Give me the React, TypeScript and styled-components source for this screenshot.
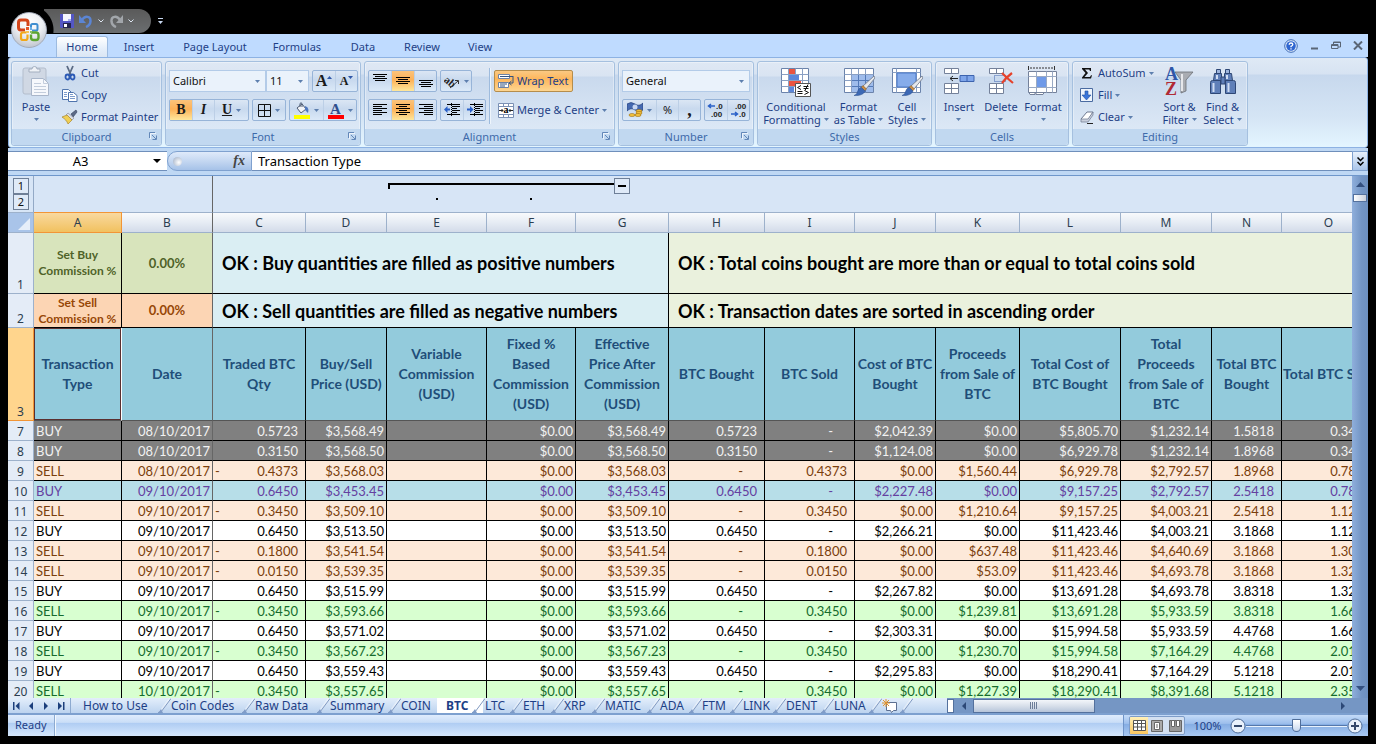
import React from 'react';
import styled, { createGlobalStyle, css } from 'styled-components';

const ui = '"Noto Sans", "Open Sans", sans-serif';
const cellFont = 'Lato, "Open Sans", sans-serif';
const navy = '#1e3f86';

const Global = createGlobalStyle`
  *, *::before, *::after { box-sizing: border-box; }
  html, body { margin: 0; background: #000; }
  body { font: 11px/16px ${ui}; color: ${navy}; }
  button, input, select { font: inherit; color: inherit; margin: 0; padding: 0; border: 0; background: none; border-radius: 0; }
  button { cursor: default; }
  svg { display: block; flex: none; }
`;

/* ---------- window ---------- */
const Window = styled.div`
  display: flex; flex-direction: column; height: 100vh; min-height: 400px;
  padding: 0 8px 8px; background: #000; position: relative;
`;
const TitleBar = styled.header`
  height: 34px; flex: none; display: flex; align-items: flex-start; padding: 9px 0 0 36px;
`;
const QuickBar = styled.div`
  height: 24px; width: 107px; padding-left: 16px; display: flex; align-items: center; gap: 5px;
  border-radius: 0 12px 12px 0;
  background: radial-gradient(circle at -15px 21px, #000 24px, transparent 25px), linear-gradient(#5a5a5a, #6b6e70);
`;
const QuickButton = styled.button`display: flex; align-items: center;`;
const Customize = styled.button`display: flex; margin: 8px 0 0 6px;`;
const Orb = styled.button`
  && { position: absolute; left: 11px; top: 12px; width: 36px; height: 36px; border-radius: 50%;
  display: flex; align-items: center; justify-content: center;
  background: radial-gradient(circle at 50% 30%, #fff 0, #eceef2 45%, #c3c8d2 80%, #e8ebf0 100%);
  border: 1px solid #a3aab8; }
`;

/* ---------- ribbon tabs ---------- */
const TabBar = styled.nav`
  height: 23px; flex: none; display: flex; align-items: flex-end; background: #bfdbff; padding-left: 48px;
`;
const RibbonTab = styled.button<{ $w: number; $on?: boolean }>`
  && { width: ${p => p.$w}px; height: 21px; line-height: 20px; text-align: center; white-space: nowrap;
  border: 1px solid transparent; border-bottom: 0; }
  ${p => p.$on && css`
    && { background: linear-gradient(#fff, #e4eefa 60%, #dbe6f4); border-color: #9dbbe0; border-radius: 3px 3px 0 0; }
  `}
`;
const WindowButtons = styled.div`
  margin-left: auto; display: flex; align-items: center; gap: 12px; height: 23px; padding-right: 5px;
  button { display: flex; }
`;

/* ---------- ribbon ---------- */
const Ribbon = styled.section`
  height: 91px; flex: none; display: flex; gap: 3px; padding: 3px 2px 1px; overflow: hidden;
  background: linear-gradient(#dfe9f5 0, #d7e3f2 16px, #c7d8ed 17px, #d5e5f5 60px, #e3f5ff 88px);
  border: 1px solid #8db2e3; border-radius: 3px;
`;
const GroupBox = styled.section<{ $w: number }>`
  width: ${p => p.$w}px; flex: none; height: 85px; display: flex; flex-direction: column;
  border: 1px solid #a5c0df; border-radius: 3px; box-shadow: inset 0 0 0 1px rgba(255,255,255,.35);
  background: linear-gradient(#dfe8f4 0, #d9e4f2 14px, #c9d9ed 15px, #dce8f6 68px);
`;
const GroupBody = styled.div`flex: 1; display: flex; padding: 0 2px;`;
const GroupLabel = styled.footer`
  height: 16px; display: flex; align-items: center; justify-content: center; color: #3e6aaa;
  background: #c1d8f0; border-radius: 0 0 3px 3px; position: relative;
`;
const Launcher = styled.button`position: absolute; right: 4px; top: 3px; display: flex;`;
const Stack = styled.div<{ $w?: number }>`
  display: flex; flex-direction: column; ${p => p.$w && `width: ${p.$w}px;`}
`;
const SmallButton = styled.button<{ $on?: boolean }>`
  && { display: flex; align-items: center; gap: 3px; height: 22px; padding: 0 3px 0 4px; white-space: nowrap; }
  ${p => p.$on && css`
    && { border: 1px solid #b58d4c; border-radius: 2px; padding: 0 4px 0 3px;
    background: linear-gradient(#fbc983, #fdb65c 40%, #fdd590); }
  `}
`;
const BigButton = styled.button<{ $w: number }>`
  && { width: ${p => p.$w}px; flex: none; display: flex; flex-direction: column; align-items: center; gap: 2px;
  padding-top: 4px; line-height: 13px; white-space: nowrap; text-align: center; }
`;
const LabelLine = styled.span`display: flex; align-items: center; justify-content: center; gap: 3px; min-height: 13px;`;
const Rows = styled.div`display: flex; flex-direction: column; gap: 7px; padding: 8px 0 0 1px;`;
const Line = styled.div`display: flex; gap: 3px;`;
const Strip = styled.div`
  display: flex; height: 22px; border: 1px solid #97b4d8; border-radius: 2px; overflow: hidden;
  background: linear-gradient(#dbe6f4, #c8d9ee 45%, #dbe9f8);
`;
const Tool = styled.button<{ $w: number; $on?: boolean }>`
  && { width: ${p => p.$w}px; display: flex; align-items: center; justify-content: center; gap: 4px; color: #1a1a1a; }
  && + && { border-left: 1px solid #bccfe6; }
  ${p => p.$on && css`&& { background: linear-gradient(#fbc37b, #fdb157 45%, #fee79c); }`}
`;
const Glyph = styled.span<{ $size?: number; $italic?: boolean; $under?: boolean }>`
  font: ${p => (p.$italic ? 'italic ' : '')}bold ${p => p.$size || 14}px/16px "Liberation Serif", serif;
  ${p => p.$under && 'text-decoration: underline;'}
`;
const SizeTool = styled.span`display: flex; align-items: center; svg { margin-bottom: 8px; }`;
const Combo = styled.label<{ $w: number }>`
  width: ${p => p.$w}px; height: 22px; display: flex; align-items: center; padding-right: 5px;
  border: 1px solid #b3cbe8; background: #eaf2fb; color: #111;
  select { appearance: none; flex: 1; min-width: 0; padding-left: 3px; outline: 0; }
`;
const Combos = styled.div`display: flex;`;
const Divider = styled.i`width: 1px; height: 56px; margin: 6px 2px 0 3px; background: #9ebbdd; border-right: 1px solid #eef5fc; box-sizing: content-box;`;

/* ---------- formula bar ---------- */
const FormulaBar = styled.div`
  height: 28px; flex: none; display: flex; padding: 3px 0 4px; background: #bfd8f4; border-bottom: 1px solid #6f97cb;
  font-size: 13px;
`;
const NameBox = styled.label`
  width: 159px; display: flex; align-items: center; background: #fff; border-top: 1px solid #6f8fbb; border-bottom: 1px solid #6f8fbb; color: #000;
  input { flex: 1; min-width: 0; text-align: center; outline: 0; }
  svg { margin-right: 6px; }
`;
const FxBox = styled.div`
  width: 85px; display: flex; align-items: center; justify-content: space-between; padding: 0 6px 0 5px;
  border: 1px solid #7fa1cf; border-radius: 11px 0 0 11px; background: linear-gradient(#dfeafa, #c4d7f1 50%, #a6c2e8);
`;
const Knob = styled.i`width: 9px; height: 9px; border-radius: 50%; background: radial-gradient(circle at 65% 60%, #fff, #9aaac2);`;
const Fx = styled.button`&& { font: italic bold 14px/16px "Liberation Serif", serif; color: #444; }`;
const FormulaInput = styled.input`
  && { flex: 1; min-width: 0; background: #fff; color: #000; padding-left: 6px; outline: 0; border: solid #6f8fbb; border-width: 1px 0; }
`;
const Expand = styled.button`
  && { width: 16px; border: 1px solid #7fa1cf; background: linear-gradient(#e8f1fc, #a9c5ea); display: flex; align-items: center; justify-content: center; }
`;

/* ---------- worksheet ---------- */
const WIDTHS = [26, 88, 91, 93, 81, 100, 89, 93, 96, 90, 81, 84, 101, 91, 70, 94];
const SheetArea = styled.main`flex: 1; min-height: 0; display: flex; background: #d7e5f6;`;
const View = styled.div`flex: 1; min-width: 0; overflow: hidden;`;
const Outline = styled.div`
  display: grid; grid-template-columns: ${WIDTHS.map(w => `${w}px`).join(' ')}; height: 36px; background: #d7e5f6;
`;
const Levels = styled.div`
  grid-column: 1; padding: 2px 5px 0 5px; border-right: 1px solid #93a9c6; display: flex; flex-direction: column;
`;
const SquareButton = styled.button`
  && { width: 16px; height: 16px; border: 1px solid #6e7f97; color: #111; line-height: 14px; text-align: center; background: #dfeaf8; flex: none; }
`;
const Frozen = styled.div`grid-column: 2 / 4; border-right: 1px solid #666;`;
const Bracket = styled.div`
  grid-column: 6 / 9; display: grid; grid-template-columns: 98px 89px 1fr; grid-template-rows: 18px 12px;
  padding: 2px 39px 0 1px;
`;
const BracketLine = styled.div`grid-column: 1 / 4; display: flex; align-items: flex-start;
  i { flex: 1; height: 6px; margin-top: 5px; border-top: 2px solid #000; border-left: 2px solid #000; }
  span { display: block; width: 8px; height: 2px; margin: 0 auto; background: #000; }
`;
const Dot = styled.i`width: 2px; height: 2px; margin: 2px auto; background: #000;`;

const Table = styled.table`
  table-layout: fixed; border-collapse: separate; border-spacing: 0; width: 1368px;
  font: 13px/17px ${cellFont}; color: #000; background: #fff;
  th, td { padding: 0; overflow: hidden; white-space: nowrap; }
`;
const ColHead = styled.th<{ $on?: boolean; $frozen?: boolean }>`
  && { padding-top: 1px; }
  height: 21px; font: 12px/18px ${ui}; color: #2c3e50;
  background: linear-gradient(#f8fafc, #e6ecf4 50%, #d3dbe9);
  border: solid #9db1cb; border-width: 1px 1px 1px 0;
  ${p => p.$on && css`background: linear-gradient(#f9d99f, #f1c15f); border-color: #f29536;`}
  ${p => p.$frozen && css`border-right-color: #666;`}
`;
const Corner = styled.th`
  height: 21px; background: #a9c4e9; border: solid #9db1cb; border-width: 1px 1px 1px 0;
  svg { margin: 3px 3px 0 auto; }
`;
const SheetRow = styled.tr<{ $h: number }>`height: ${p => p.$h}px;`;
const RowHead = styled.th<{ $on?: boolean }>`
  font: 12px/16px ${ui}; color: #2c3e50; vertical-align: bottom; background: #e4ecf7;
  border: solid #9db1cb; border-width: 0 1px 1px 0;
  ${p => p.$on && css`background: #ffd58d; border-color: #f29536;`}
`;
const Rate = styled.td<{ $tone: 'buy' | 'sell'; $small?: boolean; $frozen?: boolean }>`
  text-align: center; vertical-align: middle; font-weight: 700; border: solid #000; border-width: 0 1px 1px 0;
  ${p => p.$small && 'font-size: 12px; line-height: 16px;'}
  ${p => p.$frozen && 'border-right-color: #666;'}
  ${p => (p.$tone === 'buy' ? 'background: #d8e4bc; color: #4f6228;' : 'background: #fcd5b4; color: #974706;')}
`;
const Notice = styled.td<{ $bg: string }>`
  && { padding-left: 9px; } background: ${p => p.$bg}; font-size: 18px; line-height: 24px; font-weight: 700; vertical-align: middle;
  border: solid #000; border-width: 0 1px 1px 0;
`;
const Title = styled.th<{ $on?: boolean; $frozen?: boolean }>`
  height: 93px; background: #93cbdc; color: #1f4e79; font-size: 14px; line-height: 20px; vertical-align: middle; font-weight: 700;
  border: solid #000; border-width: 0 1px 1px 0; border-bottom-color: #555;
  ${p => p.$frozen && 'border-right-color: #666;'}
  ${p => p.$on && 'border-right-color: #fff; box-shadow: inset 0 0 0 1px #5a3030;'}
`;
type Tone = 'gray' | 'peach' | 'blue' | 'plain' | 'green';
const tones: Record<Tone, string> = {
  gray: 'background: #808080; color: #f2f2f2;',
  peach: 'background: #fde9d9; color: #7a3e0c;',
  blue: 'background: #b7dee8; color: #6440a0;',
  plain: 'background: #fff; color: #000;',
  green: 'background: #d8ffd0; color: #156b2c;',
};
const Row = styled.tr<{ $tone: Tone }>`height: 20px; td { ${p => tones[p.$tone]} }`;
const Cell = styled.td<{ $pad?: number; $left?: boolean; $frozen?: boolean }>`
  && { padding: 2px ${p => p.$pad || 2}px 0 2px; }
  text-align: ${p => (p.$left ? 'left' : 'right')}; border: solid #000; border-width: 0 1px 1px 0;
  ${p => p.$frozen && 'border-right-color: #666;'}
`;
const Signed = styled.span`display: flex; justify-content: space-between;`;

/* ---------- scroll bars ---------- */
const VScroll = styled.div`
  width: 16px; flex: none; display: flex; flex-direction: column; align-items: center; padding: 6px 0 7px;
  background: linear-gradient(90deg, #8fafdc, #7395c4 60%, #6d90c0);
`;
const VThumb = styled.i`width: 14px; height: 8px; margin: 7px 0 auto; border: 1px solid #54719d; background: linear-gradient(90deg, #fff, #c9cfdb);`;
const HScroll = styled.div`
  flex: 1; min-width: 0; display: flex; align-items: center; background: #7596c4; padding-right: 16px;
  svg { margin: 0 6px; }
`;
const Splitter = styled.i`width: 7px; height: 14px; border: 1px solid #54719d; background: #fff; margin: 0 2px 0 0;`;
const HThumb = styled.i`
  width: 122px; height: 14px; margin-right: auto; border: 1px solid #54719d; display: flex; justify-content: center; align-items: center;
  background: linear-gradient(#f3f6fa, #d7dfea 50%, #b7c5da);
`;

/* ---------- sheet tabs and status ---------- */
const Bottom = styled.div`
  height: 17px; flex: none; display: flex; background: linear-gradient(#e3eefb, #bcd3ef); border-bottom: 2px solid #7da0cf;
  font-size: 12px;
`;
const Steps = styled.div`width: 63px; flex: none; display: flex; align-items: center; justify-content: space-around; border-right: 1px solid #8daad0; button { display: flex; }`;
const Tabs = styled.nav`width: 876px; flex: none; display: flex;`;
const SheetTab = styled.button<{ $w: number; $on?: boolean; $first?: boolean }>`
  && {
    width: ${p => p.$w}px; flex: none; padding-left: ${p => (p.$first ? 12 : 2)}px; display: flex; justify-content: space-between;
    align-items: center; line-height: 15px; white-space: nowrap;
  }
  ${p => p.$on && css`&& { background: #fff; font-weight: 700; padding-left: 9px; }`}
  svg:last-child { margin-right: -2px; }
`;
const Status = styled.footer`height: 21px; flex: none; display: flex; background: linear-gradient(#dfecfd, #cadef7 35%, #b0cdf3 40%, #d6e8fd);`;
const Ready = styled.span`width: 47px; padding: 2px 0 0 7px; border-right: 1px solid #8daad0; box-shadow: 1px 0 0 #f3f9ff;`;
const StatusRight = styled.div`
  margin-left: auto; width: 245px; display: flex; align-items: center; padding: 0 5px 0 5px;
  border-left: 1px solid #6f94c8; background: linear-gradient(#c4dbf8, #9dbfec 40%, #86aee4 45%, #a9c9f2);
`;
const ViewButtons = styled.div`display: flex; height: 19px; width: 56px; border: 1px solid #7d9cc8; border-radius: 2px; overflow: hidden; background: #d3e0f1;`;
const ViewButton = styled.button<{ $on?: boolean }>`
  && { flex: 1; display: flex; align-items: center; justify-content: center; ${p => p.$on && 'background: linear-gradient(#fff0b8, #fbc75f);'} }
`;
const Percent = styled.button`&& { width: 45px; text-align: center; }`;
const ZoomButton = styled.button`display: flex;`;
const Slider = styled.input`
  && { flex: 1; min-width: 0; height: 16px; appearance: none; background: linear-gradient(transparent 7px, #5578ab 7px 8px, #e8f2fd 8px 9px, transparent 9px); }
  &::-webkit-slider-thumb {
    appearance: none; width: 9px; height: 13px; background: linear-gradient(#fff, #c8d8ee); border: 1px solid #4f6d99;
    border-radius: 1px 1px 5px 5px;
  }
`;

/* ---------- icons ---------- */
const Arrow = ({ c = '#5d7fae' }: { c?: string }) => <svg width="5" height="3"><path d="M0 0h5L2.500 3z" fill={c} /></svg>;
const Tri = ({ d, c = '#1c3f7c', w = 5, h = 8 }: { d: string; c?: string; w?: number; h?: number }) => (
  <svg width={w} height={h}><path d={d} fill={c} /></svg>
);
const LaunchIcon = () => (
  <svg width="8" height="8" fill="none" stroke="#6287b8"><path d="M.5 6V.5H6M3 3l4 4M7.500 3.500v4h-4" /><path d="M1.500 7V1.500H7" stroke="#fff" opacity=".7" /></svg>
);
const OfficeLogo = () => (
  <svg width="26" height="26" viewBox="0 0 26 26" fill="none">
    <path d="M12 9V5.500q0-2.500-2.500-2.500H5Q2.500 3 2.500 5.500v5Q2.500 13 5 13h4" stroke="#d4451a" strokeWidth="3" />
    <path d="M15 11V8.500Q15 7 16.500 7H20q1.500 0 1.500 1.500V12q0 1.500-1.500 1.500h-4" stroke="#3f8ed0" strokeWidth="2" />
    <path d="M10.500 15.500H7q-2 0-2 2V21q0 2 2 2h2.500q2 0 2-2v-3.500" stroke="#f2a818" strokeWidth="2.200" />
    <path d="M15 15.500h5q2.500 0 2.500 2.500v2.500q0 2.500-2.500 2.500h-2.500Q15 23 15 20.500v-3" stroke="#5da532" strokeWidth="2.400" />
    <path d="M10 10h3v3h-3z" fill="#e2562a" /><path d="M14 10h2v3h-2z" fill="#6aaee6" /><path d="M10 14h3v2h-3z" fill="#f6c454" /><path d="M14 14h2v2h-2z" fill="#8cc462" />
  </svg>
);
const SaveIcon = () => (
  <svg width="14" height="14"><path d="M0 0h14v14H1L0 13z" fill="#5457c4" /><path d="M3 0h8v7H3z" fill="#f4f6ff" /><path d="M3 9h8v5H3z" fill="#23254f" /><path d="M4 10h3v3H4z" fill="#fff" /><path d="M8 5h3v2H8z" fill="#a8b1ee" /></svg>
);
const UndoIcon = ({ redo }: { redo?: boolean }) => (
  <svg width="14" height="14" viewBox="0 0 14 14"><g transform={redo ? 'translate(14 0) scale(-1 1)' : undefined}>
    <path d="M3 6C6 1 12 2 11.500 7.500 11.200 10 9.500 12 7 13" fill="none" stroke={redo ? '#a2a6ab' : '#5b85d4'} strokeWidth="2.400" />
    <path d="M0 1v8h7z" fill={redo ? '#a2a6ab' : '#5b85d4'} />
  </g></svg>
);
const QuickArrow = () => <svg width="6" height="4"><path d="M.5.5 3 3 5.500.5" fill="none" stroke="#dde6f2" /></svg>;
const PasteIcon = () => (
  <svg width="28" height="32" viewBox="0 0 28 32">
    <rect x="1" y="2" width="23" height="26" rx="2" fill="#d0d8e4" stroke="#b3bdcc" /><path d="M7 6V3h3a2.500 2.500 0 0 1 5 0h3v3z" fill="#eef1f6" stroke="#a3aebf" />
    <path d="M9.500 12.500h12l5 5v12h-17z" fill="#f6f8fc" stroke="#a9b6ca" /><path d="M21.500 12.500v5h5M12 17.500h7M12 20.500h12M12 23.500h12M12 26.500h12" fill="none" stroke="#c3cddc" />
  </svg>
);
const CutIcon = () => (
  <svg width="16" height="16" viewBox="0 0 16 16" fill="none"><path d="M5 1l4 9M11 1L7 10" stroke="#5b6b85" strokeWidth="1.800" /><ellipse cx="5.500" cy="12" rx="2" ry="2.500" stroke="#2c5ab5" strokeWidth="1.800" /><ellipse cx="10.500" cy="12" rx="2" ry="2.500" stroke="#2c5ab5" strokeWidth="1.800" /></svg>
);
const CopyIcon = () => (
  <svg width="16" height="16" viewBox="0 0 16 16" fill="#fff" stroke="#4f74ad"><path d="M.5 2.500h6l3 3v7h-9z" /><path d="M6.500 5.500h5l3.500 3v6H6.500z" /><path d="M2 5.500h3M2 7.500h3M2 9.500h3M8 9.500h5M8 11.500h5M8 7.500h3" stroke="#7d9ccc" /></svg>
);
const PainterIcon = () => (
  <svg width="16" height="16" viewBox="0 0 16 16"><path d="M9 5l5-4 1 2-4 5z" fill="#5c6a86" stroke="#3c4964" strokeWidth=".7" /><path d="M6 4l6 5-2 2-6-5z" fill="#dcdfe8" stroke="#7c7f92" strokeWidth=".6" /><path d="M0 8l5-2 5 5-4 4c-1-3-3-5-6-7z" fill="#f0cf55" stroke="#a07a20" strokeWidth=".6" /></svg>
);
const BordersIcon = () => <svg width="13" height="13" fill="none" stroke="#111"><path d="M.5.5h12v12H.5zM6.500 0v13M0 6.500h13" /></svg>;
const FillIcon = () => (
  <svg width="16" height="17" viewBox="0 0 16 17"><path d="M3 6l5-4 4 5-5 4z" fill="#f2f4f8" stroke="#4d5b73" /><path d="M6 5V1.500q1-1.500 2 0V5" fill="none" stroke="#4d5b73" /><path d="M11 4c3 1 4 3 3 7l-3-3z" fill="#5078bd" /><path d="M0 13h16v4H0z" fill="#ff0" /></svg>
);
const bars = (rows: [number, number][], y0: number) => rows.map(([x, w], i) => <path key={i} d={`M${x} ${y0 + i * 2}.500h${w}`} />);
const AlignIcon = ({ kind }: { kind: string }) => {
  const v: Record<string, [[number, number][], number]> = {
    top: [[[0, 14], [2, 10], [0, 14], [2, 10]], 0], mid: [[[0, 14], [2, 10], [0, 14], [2, 10]], 3], bot: [[[0, 14], [2, 10], [0, 14], [2, 10]], 6],
    left: [[[0, 14], [0, 9], [0, 14], [0, 9], [0, 14], [0, 9]], 1],
    center: [[[0, 14], [3, 8], [0, 14], [3, 8], [0, 14], [3, 8]], 1],
    right: [[[0, 14], [5, 9], [0, 14], [5, 9], [0, 14], [5, 9]], 1],
  };
  return <svg width="14" height="14" stroke="#000">{bars(v[kind][0], v[kind][1])}</svg>;
};
const IndentIcon = ({ inc }: { inc?: boolean }) => (
  <svg width="16" height="14" viewBox="0 0 16 14"><g stroke="#000"><path d="M3 1.500h13M8 3.500h8M8 5.500h5M8 7.500h8M8 9.500h5M3 11.500h13" /><path d="M7.500 0v14" strokeDasharray="1 1" /></g>
    <path d={inc ? 'M6.500 6.500L3 3v2.500H0v2h3V10z' : 'M0 6.500L3.500 3v2.500H6v2H3.500V10z'} fill="#2a60c8" /></svg>
);
const AngleIcon = () => (
  <svg width="16" height="15" viewBox="0 0 16 15"><text x="0" y="11" transform="rotate(40 5 8)" fontFamily="Liberation Serif, serif" fontWeight="700" fontSize="11" fill="#222">ab</text><path d="M6 14l8-7M14.500 10V6.500H11" fill="none" stroke="#333" /></svg>
);
const WrapIcon = () => (
  <svg width="16" height="15" viewBox="0 0 16 15"><path d="M.5.5h11v4H.5zM.5 8.500h10v5H.5z" fill="#fff" stroke="#6d82a5" /><path d="M2 2.500h13M2 10h7M2 12h5" stroke="#33527f" fill="none" /><path d="M15 2v7h-3M13.500 7L11 9l2.500 2" fill="none" stroke="#33527f" /></svg>
);
const MergeIcon = () => (
  <svg width="16" height="15" viewBox="0 0 16 15"><path d="M.5.5h15v14H.5zM5.500.5v3M10.500.5v3M5.500 11.500v3M10.500 11.500v3M.5 3.500h15M.5 11.500h15" fill="#fff" stroke="#7b91b5" /><path d="M1 7.500h4M15 7.500h-4M3.500 6L5 7.500 3.500 9M12.500 6L11 7.500l1.500 1.500" fill="none" stroke="#222" /><text x="5.500" y="10" fontFamily="Liberation Serif, serif" fontWeight="700" fontSize="10">a</text></svg>
);
const MoneyIcon = () => (
  <svg width="16" height="16" viewBox="0 0 16 16"><path d="M0 2q4-3 8 0t8-1v7q-4 3-8 0t-8 1z" fill="#4569b0" stroke="#27447f" strokeWidth=".7" /><circle cx="8" cy="5" r="2.500" fill="#c9d8f2" /><g fill="#f5c33e" stroke="#9b6d12" strokeWidth=".6"><ellipse cx="12" cy="9" rx="3" ry="1.500" /><ellipse cx="12" cy="11" rx="3" ry="1.500" /><ellipse cx="11" cy="13" rx="3" ry="1.500" /><ellipse cx="5" cy="13" rx="3" ry="1.500" /></g></svg>
);
const DecimalIcon = ({ less }: { less?: boolean }) => (
  <svg width="18" height="18" viewBox="0 0 18 18" fontFamily="Liberation Sans, sans-serif" fontWeight="700" fontSize="8" fill="#222">
    <text x={less ? 5 : 9} y="8">{less ? '.00' : '.0'}</text><text x={less ? 9 : 4} y="16">{less ? '.0' : '.00'}</text>
    {less ? <path d="M1 13h6M5 11l2.500 2L5 15" fill="none" stroke="#2a60c8" strokeWidth="1.500" /> : <path d="M8 5H2M4 3L1.500 5 4 7" fill="none" stroke="#2a60c8" strokeWidth="1.500" />}
  </svg>
);
const GridBase = ({ w = 27, h = 24 }: { w?: number; h?: number }) => (
  <><path d={`M.5.5h${w}v${h}H.5z`} fill="#fff" stroke="#6b83ab" /><path d={`M7.500 .5v${h}M14.500 .5v${h}M21.500 .5v${h}M.5 6.500h${w}M.5 12.500h${w}M.5 18.500h${w}`} stroke="#8aa0c3" fill="none" /></>
);
const Brush = () => (
  <g>
    <path d="M30 8l1 2-9 11-3-3z" fill="#e4e7ec" stroke="#6d7687" strokeWidth=".8" />
    <path d="M19 17.500l3.500 3.500-2 2-3.500-3.500z" fill="#c98e46" stroke="#8a5a22" strokeWidth=".5" />
    <path d="M17.500 19.500l3.500 3.500c-1 3-5 5-11 4.500 3-1 3-3 4-5 .7-1.800 2-3 3.500-3z" fill="#3c68b4" stroke="#294c8b" strokeWidth=".5" />
  </g>
);
const CondIcon = () => (
  <svg width="32" height="32" viewBox="-1 -2 32 32"><GridBase /><path d="M8 1h6v5H8zM8 13h12v5H8z" fill="#ea5440" /><path d="M8 7h10v5H8zM8 19h5v5H8z" fill="#5c87da" /><path d="M14.500 15.500h15v13h-15z" fill="#fff" stroke="#555" /><path d="M20 17.500l-3.500 2 3.500 2M16.500 23.500h5M16.500 25.500h5M22.500 18.500h5M22.500 20.500h5M27 16.500l-3 6M23.500 22.500l4 2-4 2" fill="none" stroke="#111" /></svg>
);
const TableIcon = () => <svg width="32" height="32" viewBox="-1 -2 32 32"><GridBase w={29} /><path d="M8 7h21v17H8z" fill="#7fa6e4" opacity=".75" /><path d="M14.500 7v17M21.500 7v17M8 12.500h21M8 18.500h21" stroke="#5379b8" /><Brush /></svg>;
const StylesIcon = () => <svg width="32" height="32" viewBox="-1 -2 32 32"><path d="M.5.5h28v24H.5z" fill="#fff" stroke="#6b83ab" /><path d="M4.500.5v24M24.500.5v24M.5 4.500h28M.5 19.500h28" stroke="#8aa0c3" /><path d="M5 5h19v14H5z" fill="#86acea" stroke="#4a78c8" /><Brush /></svg>;
const InsertIcon = () => (
  <svg width="32" height="32" viewBox="0 0 32 32"><path d="M1.500 2.500h14v5h-14zM8.500 2.500v5M1.500 17.500h14v10h-14zM8.500 17.500v10M1.500 22.500h14" fill="#fff" stroke="#74819a" /><path d="M17 9.500h14v6H17zM24 9.500v6" fill="#7ea5ea" stroke="#3c63ae" /><path d="M7 12.500h8M10 10l-3 2.500 3 2.500" fill="none" stroke="#222" /></svg>
);
const DeleteIcon = () => (
  <svg width="32" height="32" viewBox="0 0 32 32"><path d="M4.500 2.500h14v5h-14zM11.500 2.500v5" fill="#fff" stroke="#74819a" /><path d="M4.500 17.500h14v10h-14zM11.500 17.500v10M4.500 22.500h14" fill="#fff" stroke="#74819a" /><path d="M9.500 9.500h11v6h-11z" fill="none" stroke="#3c63ae" strokeDasharray="1 1" /><path d="M17 7c3 3 6 6 11 10M27 7c-4 3-7 6-10 10" fill="none" stroke="#e5422b" strokeWidth="2.200" /></svg>
);
const FormatIcon = () => (
  <svg width="32" height="32" viewBox="0 0 32 32"><path d="M1.500 0v4M27.500 0v4" stroke="#333" /><path d="M3 2h23" stroke="#333" strokeDasharray="2 1" /><path d="M1.500 5.500h28v21h-28z" fill="#fff" stroke="#74819a" /><path d="M9.500 5.500v21M19.500 5.500v21M25.500 5.500v21M1.500 10.500h28M1.500 21.500h28" stroke="#9aaac4" /><path d="M10 11h9v10h-9z" fill="#6f9ae8" /><path d="M2 26.500h6v2H3zM9 26.500h8l-1 2H9z" fill="#fff" stroke="#74819a" /></svg>
);
const FillDownIcon = () => <svg width="16" height="16" viewBox="0 0 16 16"><path d="M1.500 1.500h12v13h-12z" fill="#eef4fc" stroke="#4a6ba1" /><path d="M6 4h3v4h3l-4.500 5L3 8h3z" fill="#3b75d9" stroke="#20509f" strokeWidth=".6" /></svg>;
const EraserIcon = () => <svg width="16" height="16" viewBox="0 0 16 16"><path d="M2 10l6-7h6l-5 8H3z" fill="#fff" stroke="#6d7890" /><path d="M2 10v3h7l5-7V3l-5 7z" fill="#c9cfdc" stroke="#6d7890" strokeWidth=".7" /><path d="M8 14.500h6" stroke="#222" /></svg>;
const SigmaIcon = () => <svg width="16" height="16" viewBox="0 0 16 16"><path d="M3 3h9v3h-1l-.7-1.500H6l3 3.500-3.500 4H11l1-1.800h1L12 13.500H3v-1L6.500 8 3 4z" fill="#111" /></svg>;
const SortIcon = () => (
  <svg width="32" height="32" viewBox="0 0 32 32" fontFamily="Liberation Serif, serif" fontWeight="700" fontSize="18"><text x="1" y="14" fill="#2f57a8">A</text><text x="1" y="29" fill="#b02a35">Z</text><path d="M11 6h18l-7 8v11l-5 2V14z" fill="#a9acb2" stroke="#6b6e75" strokeWidth=".8" /><path d="M18 8v17" stroke="#e6e7ea" strokeWidth="2" /></svg>
);
const FindIcon = () => (
  <svg width="32" height="32" viewBox="0 0 32 32" fill="#5f7fb8" stroke="#2e4775"><path d="M9.500 3.500h4v4h-4zM18.500 3.500h4v4h-4z" fill="#9db4dc" /><path d="M7.500 7.500h7v7h-8zM17.500 7.500h7l1 7h-8z" /><path d="M3.500 16.500q0-2 2-2h8v13h-10zM18.500 14.500h8q2 0 2 2v11h-10z" /><path d="M14 11h4v7h-4z" /><path d="M6.500 17v9M21.500 17v9M10 9v4M20 9v4" stroke="#cfdcf3" strokeWidth="2" /></svg>
);
const HelpIcon = () => (
  <svg width="14" height="14"><circle cx="7" cy="7" r="6.300" fill="#e6f0fc" stroke="#3b69b5" /><circle cx="7" cy="7" r="4.800" fill="#2f66d0" /><path d="M5.200 5.700Q5.200 4 7 4t1.800 1.500Q8.800 6.500 7 7.400v.8M7 9.200v1.300" fill="none" stroke="#fff" strokeWidth="1.300" /></svg>
);
const Slash = () => <svg width="13" height="15"><path d="M0 14.500h3L13 0H11z" fill="#fff" opacity=".4" /><path d="M0 14.500L3 14 13 .5" fill="none" stroke="#8099c0" /><path d="M0 15l3-4 2 4z" fill="#7f9cc8" /></svg>;
const NewSheetIcon = () => <svg width="16" height="14" viewBox="0 0 16 14"><path d="M4.500 3.500h10v8h-3l-2 2-1-2h-4z" fill="#fff" stroke="#5c6f91" /><path d="M4 0v8M0 4h8M1 1l6 6M7 1L1 7" stroke="#e2932c" /></svg>;
const ZoomIcon = ({ plus }: { plus?: boolean }) => <svg width="16" height="16"><circle cx="8" cy="8" r="7" fill="#e9f1fb" stroke="#4f6d99" /><path d={plus ? 'M4 8h8M8 4v8' : 'M4 8h8'} stroke="#34486b" strokeWidth="2" /></svg>;

/* ---------- data ---------- */
const LETTERS = 'ABCDEFGHIJKLMNO'.split('');
const TITLES = [
  ['Transaction', 'Type'], ['Date'], ['Traded BTC', 'Qty'], ['Buy/Sell', 'Price (USD)'], ['Variable', 'Commission', '(USD)'],
  ['Fixed %', 'Based', 'Commission', '(USD)'], ['Effective', 'Price After', 'Commission', '(USD)'], ['BTC Bought'], ['BTC Sold'],
  ['Cost of BTC', 'Bought'], ['Proceeds', 'from Sale of', 'BTC'], ['Total Cost of', 'BTC Bought'],
  ['Total', 'Proceeds', 'from Sale of', 'BTC'], ['Total BTC', 'Bought'], ['Total BTC Sold'],
];
type Trade = [number, Tone, string, string, string, string, string, string, string, string, string];
const TRADES: Trade[] = [
  [7, 'gray', '08/10/2017', '0.5723', '3,568.49', '2,042.39', '0.00', '5,805.70', '1,232.14', '1.5818', '0.3441'],
  [8, 'gray', '08/10/2017', '0.3150', '3,568.50', '1,124.08', '0.00', '6,929.78', '1,232.14', '1.8968', '0.3441'],
  [9, 'peach', '08/10/2017', '0.4373', '3,568.03', '0.00', '1,560.44', '6,929.78', '2,792.57', '1.8968', '0.7814'],
  [10, 'blue', '09/10/2017', '0.6450', '3,453.45', '2,227.48', '0.00', '9,157.25', '2,792.57', '2.5418', '0.7814'],
  [11, 'peach', '09/10/2017', '0.3450', '3,509.10', '0.00', '1,210.64', '9,157.25', '4,003.21', '2.5418', '1.1264'],
  [12, 'plain', '09/10/2017', '0.6450', '3,513.50', '2,266.21', '0.00', '11,423.46', '4,003.21', '3.1868', '1.1264'],
  [13, 'peach', '09/10/2017', '0.1800', '3,541.54', '0.00', '637.48', '11,423.46', '4,640.69', '3.1868', '1.3064'],
  [14, 'peach', '09/10/2017', '0.0150', '3,539.35', '0.00', '53.09', '11,423.46', '4,693.78', '3.1868', '1.3214'],
  [15, 'plain', '09/10/2017', '0.6450', '3,515.99', '2,267.82', '0.00', '13,691.28', '4,693.78', '3.8318', '1.3214'],
  [16, 'green', '09/10/2017', '0.3450', '3,593.66', '0.00', '1,239.81', '13,691.28', '5,933.59', '3.8318', '1.6664'],
  [17, 'plain', '09/10/2017', '0.6450', '3,571.02', '2,303.31', '0.00', '15,994.58', '5,933.59', '4.4768', '1.6664'],
  [18, 'green', '09/10/2017', '0.3450', '3,567.23', '0.00', '1,230.70', '15,994.58', '7,164.29', '4.4768', '2.0114'],
  [19, 'plain', '09/10/2017', '0.6450', '3,559.43', '2,295.83', '0.00', '18,290.41', '7,164.29', '5.1218', '2.0114'],
  [20, 'green', '10/10/2017', '0.3450', '3,557.65', '0.00', '1,227.39', '18,290.41', '8,391.68', '5.1218', '2.3564'],
];
const RIBBON_TABS: [string, number][] = [['Home', 52], ['Insert', 62], ['Page Layout', 90], ['Formulas', 74], ['Data', 58], ['Review', 60], ['View', 56]];
const SHEETS: [string, number][] = [
  ['How to Use', 98], ['Coin Codes', 84], ['Raw Data', 75], ['Summary', 71], ['COIN', 38], ['BTC', 46], ['LTC', 38], ['ETH', 41], ['XRP', 41],
  ['MATIC', 55], ['ADA', 42], ['FTM', 41], ['LINK', 43], ['DENT', 48], ['LUNA', 48],
];

const Group = ({ w, title, launch, children }: { w: number; title: string; launch?: boolean; children: React.ReactNode }) => (
  <GroupBox $w={w} aria-label={title}>
    <GroupBody>{children}</GroupBody>
    <GroupLabel>{title}{launch && <Launcher aria-label={`${title} options`}><LaunchIcon /></Launcher>}</GroupLabel>
  </GroupBox>
);
const Big = ({ w, icon, a, b }: { w: number; icon: React.ReactNode; a: string; b?: string }) => (
  <BigButton $w={w}>{icon}<span><LabelLine>{a}</LabelLine><LabelLine>{b}<Arrow /></LabelLine></span></BigButton>
);
const Select = ({ w, label, value }: { w: number; label: string; value: string }) => (
  <Combo $w={w}><select aria-label={label}><option>{value}</option></select><Arrow /></Combo>
);

function TradeRow({ t }: { t: Trade }) {
  const [n, tone, date, qty, price, cost, proceeds, totalCost, totalProceeds, bought, sold] = t;
  const sell = tone === 'peach' || tone === 'green';
  return (
    <Row $tone={tone}>
      <RowHead scope="row">{n}</RowHead>
      <Cell $left>{sell ? 'SELL' : 'BUY'}</Cell>
      <Cell $frozen>{date}</Cell>
      <Cell $pad={7}><Signed><span>{sell ? '-' : ''}</span>{qty}</Signed></Cell>
      <Cell>${price}</Cell>
      <Cell />
      <Cell>$0.00</Cell>
      <Cell>${price}</Cell>
      <Cell $pad={sell ? 21 : 7}>{sell ? '-' : qty}</Cell>
      <Cell $pad={sell ? 7 : 21}>{sell ? qty : '-'}</Cell>
      <Cell>${cost}</Cell>
      <Cell>${proceeds}</Cell>
      <Cell>${totalCost}</Cell>
      <Cell>${totalProceeds}</Cell>
      <Cell $pad={7}>{bought}</Cell>
      <Cell $pad={4}>{sold}</Cell>
    </Row>
  );
}

export default function App() {
  return (
    <Window>
      <Global />
      <TitleBar>
        <QuickBar>
          <QuickButton aria-label="Save"><SaveIcon /></QuickButton>
          <QuickButton aria-label="Undo"><UndoIcon /></QuickButton>
          <QuickButton aria-label="Undo list"><QuickArrow /></QuickButton>
          <QuickButton aria-label="Redo"><UndoIcon redo /></QuickButton>
          <QuickButton aria-label="Redo list"><QuickArrow /></QuickButton>
        </QuickBar>
        <Customize aria-label="Customize toolbar"><svg width="7" height="8"><path d="M1 1.500h5" stroke="#c9d9f2" /><path d="M1 4h5L3.500 7z" fill="#c9d9f2" /></svg></Customize>
      </TitleBar>
      <Orb aria-label="Office"><OfficeLogo /></Orb>

      <TabBar>
        {RIBBON_TABS.map(([name, w], i) => <RibbonTab key={name} $w={w} $on={i === 0}>{name}</RibbonTab>)}
        <WindowButtons>
          <button aria-label="Help"><HelpIcon /></button>
          <button aria-label="Minimize"><svg width="9" height="9"><path d="M1 7.500h7" stroke="#5a6676" strokeWidth="2" /></svg></button>
          <button aria-label="Restore"><svg width="10" height="9" fill="none" stroke="#5a6676"><path d="M2.500 3V1h7v5H7M.5 3.500h6.500v4H.5zM.5 4.500H7M2.500 1.500h7" /></svg></button>
          <button aria-label="Close"><svg width="10" height="9" stroke="#5a6676" strokeWidth="2"><path d="M1 .5l8 8M9 .5l-8 8" /></svg></button>
        </WindowButtons>
      </TabBar>

      <Ribbon>
        <Group w={151} title="Clipboard" launch>
          <Big w={44} icon={<PasteIcon />} a="Paste" />
          <Stack>
            <SmallButton><CutIcon />Cut</SmallButton>
            <SmallButton><CopyIcon />Copy</SmallButton>
            <SmallButton><PainterIcon />Format Painter</SmallButton>
          </Stack>
        </Group>
        <Group w={196} title="Font" launch>
          <Rows>
            <Line>
              <Combos><Select w={97} label="Font" value="Calibri" /><Select w={43} label="Font size" value="11" /></Combos>
              <Strip>
                <Tool $w={22} aria-label="Grow font"><SizeTool><Glyph $size={16}>A</Glyph><Tri d="M0 3L2.500 0 5 3z" c="#2f57a8" w={5} h={3} /></SizeTool></Tool>
                <Tool $w={22} aria-label="Shrink font"><SizeTool><Glyph $size={12}>A</Glyph><Tri d="M0 0h5L2.500 3z" c="#2f57a8" w={5} h={3} /></SizeTool></Tool>
              </Strip>
            </Line>
            <Line>
              <Strip>
                <Tool $w={22} $on aria-label="Bold"><Glyph>B</Glyph></Tool>
                <Tool $w={22} aria-label="Italic"><Glyph $italic>I</Glyph></Tool>
                <Tool $w={34} aria-label="Underline"><Glyph $under>U</Glyph><Arrow /></Tool>
              </Strip>
              <Strip><Tool $w={32} aria-label="Borders"><BordersIcon /><Arrow /></Tool></Strip>
              <Strip>
                <Tool $w={33} aria-label="Fill color"><FillIcon /><Arrow /></Tool>
                <Tool $w={33} aria-label="Font color">
                  <svg width="16" height="17"><text x="2" y="12" fontFamily="Liberation Serif, serif" fontWeight="700" fontSize="15" fill="#2f4f8d">A</text><path d="M0 13h16v4H0z" fill="red" /></svg><Arrow />
                </Tool>
              </Strip>
            </Line>
          </Rows>
        </Group>
        <Group w={251} title="Alignment" launch>
          <Rows>
            <Line>
              <Strip>
                <Tool $w={22} aria-label="Top align"><AlignIcon kind="top" /></Tool>
                <Tool $w={23} $on aria-label="Middle align"><AlignIcon kind="mid" /></Tool>
                <Tool $w={22} aria-label="Bottom align"><AlignIcon kind="bot" /></Tool>
              </Strip>
              <Strip><Tool $w={30} aria-label="Orientation"><AngleIcon /><Arrow /></Tool></Strip>
            </Line>
            <Line>
              <Strip>
                <Tool $w={22} aria-label="Align left"><AlignIcon kind="left" /></Tool>
                <Tool $w={23} $on aria-label="Center"><AlignIcon kind="center" /></Tool>
                <Tool $w={22} aria-label="Align right"><AlignIcon kind="right" /></Tool>
              </Strip>
              <Strip>
                <Tool $w={22} aria-label="Decrease indent"><IndentIcon /></Tool>
                <Tool $w={22} aria-label="Increase indent"><IndentIcon inc /></Tool>
              </Strip>
            </Line>
          </Rows>
          <Divider />
          <Rows>
            <Line><SmallButton $on><WrapIcon />Wrap Text</SmallButton></Line>
            <Line><SmallButton><MergeIcon />Merge &amp; Center <Arrow /></SmallButton></Line>
          </Rows>
        </Group>
        <Group w={136} title="Number" launch>
          <Rows>
            <Line><Select w={128} label="Number format" value="General" /></Line>
            <Line>
              <Strip>
                <Tool $w={33} aria-label="Accounting format"><MoneyIcon /><Arrow /></Tool>
                <Tool $w={22}>%</Tool>
                <Tool $w={22}><Glyph $size={18}>,</Glyph></Tool>
              </Strip>
              <Strip>
                <Tool $w={22} aria-label="Increase decimal"><DecimalIcon /></Tool>
                <Tool $w={22} aria-label="Decrease decimal"><DecimalIcon less /></Tool>
              </Strip>
            </Line>
          </Rows>
        </Group>
        <Group w={175} title="Styles">
          <Big w={72} icon={<CondIcon />} a="Conditional" b="Formatting" />
          <Big w={53} icon={<TableIcon />} a="Format" b="as Table" />
          <Big w={44} icon={<StylesIcon />} a="Cell" b="Styles" />
        </Group>
        <Group w={134} title="Cells">
          <Big w={42} icon={<InsertIcon />} a="Insert" />
          <Big w={42} icon={<DeleteIcon />} a="Delete" />
          <Big w={42} icon={<FormatIcon />} a="Format" />
        </Group>
        <Group w={176} title="Editing">
          <Stack $w={83}>
            <SmallButton><SigmaIcon />AutoSum <Arrow /></SmallButton>
            <SmallButton><FillDownIcon />Fill <Arrow /></SmallButton>
            <SmallButton><EraserIcon />Clear <Arrow /></SmallButton>
          </Stack>
          <Big w={43} icon={<SortIcon />} a="Sort &amp;" b="Filter" />
          <Big w={43} icon={<FindIcon />} a="Find &amp;" b="Select" />
        </Group>
      </Ribbon>

      <FormulaBar>
        <NameBox><input aria-label="Name box" defaultValue="A3" /><Tri d="M0 0h8L4 4z" c="#000" w={8} h={4} /></NameBox>
        <FxBox><Knob /><Fx aria-label="Insert function">fx</Fx></FxBox>
        <FormulaInput aria-label="Formula" defaultValue="Transaction Type" />
        <Expand aria-label="Expand formula bar"><svg width="7" height="9" fill="none" stroke="#000" strokeWidth="1.500"><path d="M.5.5l3 3 3-3M.5 5l3 3 3-3" /></svg></Expand>
      </FormulaBar>

      <SheetArea>
        <View>
          <Outline>
            <Levels><SquareButton>1</SquareButton><SquareButton>2</SquareButton></Levels>
            <Frozen />
            <Bracket>
              <BracketLine><i /><SquareButton aria-label="Collapse columns"><span /></SquareButton></BracketLine>
              <Dot /><Dot />
            </Bracket>
          </Outline>
          <Table>
            <colgroup>{WIDTHS.map((w, i) => <col key={i} width={w} />)}</colgroup>
            <thead>
              <tr>
                <Corner aria-label="Select all"><svg width="12" height="12"><path d="M12 0v12H0z" fill="#e6eef9" /></svg></Corner>
                {LETTERS.map((l, i) => <ColHead key={l} scope="col" $on={i === 0} $frozen={i === 1}>{l}</ColHead>)}
              </tr>
            </thead>
            <tbody>
              <SheetRow $h={61}>
                <RowHead scope="row">1</RowHead>
                <Rate $tone="buy" $small>Set Buy<br />Commission %</Rate>
                <Rate $tone="buy" $frozen>0.00%</Rate>
                <Notice colSpan={5} $bg="#daeef3">OK : Buy quantities are filled as positive numbers</Notice>
                <Notice colSpan={8} $bg="#eaf1dd">OK : Total coins bought are more than or equal to total coins sold</Notice>
              </SheetRow>
              <SheetRow $h={34}>
                <RowHead scope="row">2</RowHead>
                <Rate $tone="sell" $small>Set Sell<br />Commission %</Rate>
                <Rate $tone="sell" $frozen>0.00%</Rate>
                <Notice colSpan={5} $bg="#daeef3">OK : Sell quantities are filled as negative numbers</Notice>
                <Notice colSpan={8} $bg="#eaf1dd">OK : Transaction dates are sorted in ascending order</Notice>
              </SheetRow>
              <tr>
                <RowHead scope="row" $on>3</RowHead>
                {TITLES.map((lines, i) => (
                  <Title key={LETTERS[i]} $on={i === 0} $frozen={i === 1}>
                    {lines.map((s, k) => <React.Fragment key={k}>{k > 0 && <br />}{s}</React.Fragment>)}
                  </Title>
                ))}
              </tr>
              {TRADES.map(t => <TradeRow key={t[0]} t={t} />)}
            </tbody>
          </Table>
        </View>
        <VScroll><Tri d="M0 5L4.500 0 9 5z" c="#34507f" w={9} h={5} /><VThumb /><Tri d="M0 0h9L4.500 5z" c="#34507f" w={9} h={5} /></VScroll>
      </SheetArea>

      <Bottom>
        <Steps>
          <button aria-label="First sheet"><Tri d="M0 0h1.500v8H0zM6.500 0v8l-4-4z" w={7} /></button>
          <button aria-label="Previous sheet"><Tri d="M4 0v8L0 4z" /></button>
          <button aria-label="Next sheet"><Tri d="M0 0l4 4-4 4z" /></button>
          <button aria-label="Last sheet"><Tri d="M0 0l4 4-4 4zM5 0h1.500v8H5z" w={7} /></button>
        </Steps>
        <Tabs>
          {SHEETS.map(([name, w], i) => (
            <SheetTab key={name} $w={w} $first={i === 0} $on={name === 'BTC'}>{name}{name !== 'COIN' && <Slash />}</SheetTab>
          ))}
          <SheetTab $w={31} aria-label="Insert worksheet"><NewSheetIcon /><Slash /></SheetTab>
        </Tabs>
        <HScroll>
          <Splitter />
          <Tri d="M4 0v8L0 4z" c="#2c4877" />
          <HThumb><svg width="8" height="7" stroke="#6c7d98"><path d="M.5 0v7M2.500 0v7M4.500 0v7M6.500 0v7" /></svg></HThumb>
          <Tri d="M0 0l4 4-4 4z" c="#2c4877" />
        </HScroll>
      </Bottom>

      <Status>
        <Ready>Ready</Ready>
        <StatusRight>
          <ViewButtons>
            <ViewButton $on aria-label="Normal"><svg width="13" height="11" fill="#fff" stroke="#555"><path d="M.5.5h12v10H.5zM4.500.5v10M8.500.5v10M.5 3.500h12M.5 7h12" /></svg></ViewButton>
            <ViewButton aria-label="Page layout"><svg width="12" height="12" fill="#fff" stroke="#666"><path d="M.5.500h11v11H.5z" fill="#aaa" /><path d="M3.500 2.500h5v7h-5zM5 5h2M5 7h2" /></svg></ViewButton>
            <ViewButton aria-label="Page break preview"><svg width="13" height="12" fill="#999" stroke="#666"><path d="M.5.5h12v11H.5z" /><path d="M2.500.5h3v6h-3zM7.500.5h3v6h-3z" fill="#fff" /></svg></ViewButton>
          </ViewButtons>
          <Percent>100%</Percent>
          <ZoomButton aria-label="Zoom out"><ZoomIcon /></ZoomButton>
          <Slider type="range" aria-label="Zoom" defaultValue={50} />
          <ZoomButton aria-label="Zoom in"><ZoomIcon plus /></ZoomButton>
        </StatusRight>
      </Status>
    </Window>
  );
}
